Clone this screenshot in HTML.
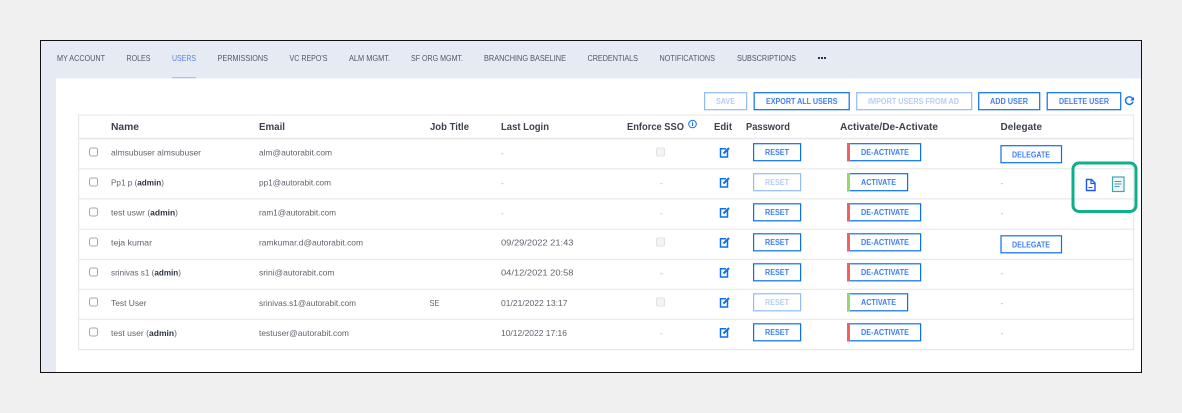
<!DOCTYPE html>
<html><head><meta charset="utf-8"><style>
html,body{margin:0;padding:0;background:#f0f0f0;width:1182px;height:413px;overflow:hidden}
svg{display:block;font-family:"Liberation Sans",sans-serif}
.tab{font-size:8px;fill:#4f5867}
.th{font-size:10px;font-weight:bold;fill:#3d4250}
.td{font-size:8.5px;fill:#5f646d}
.a{font-weight:bold;fill:#2c3342}
.btn{font-size:8px;font-weight:bold;fill:#3f7ff2}
.dis{font-size:8px;font-weight:bold;fill:#b6cdf7}
.bx{fill:#fff;stroke:#0b6ff2;stroke-width:1.2}
.bd{fill:#fff;stroke:#92bcf8;stroke-width:1.2}
.dash{font-size:8px;fill:#aaa}
.ln{stroke:#e8e8e8;stroke-width:1.2}
.cb{fill:#fff;stroke:#a8a8a8;stroke-width:1}
.cd{fill:#f4f4f4;stroke:#e2e2e2;stroke-width:1}
</style></head><body>
<svg width="1182" height="413" viewBox="0 0 1182 413" xmlns="http://www.w3.org/2000/svg">
<defs>
<g id="ed" fill="none" stroke="#0b6ff2"><path d="M727.500 150v7h-7v-8.300h5.500" stroke-width="1.500"/><path d="M723.500 153.500l5.500-5.500" stroke-width="2"/></g>
</defs>
<rect x="40.500" y="40.500" width="1101" height="332" fill="#fff" stroke="#111" stroke-width="1"/>
<rect x="41" y="41" width="1100" height="37.500" fill="#e6ebf3"/>
<rect x="41" y="78" width="15" height="294" fill="#e6ebf3"/>
<rect x="172" y="77" width="24" height="1.300" fill="#a9c6f3"/>

<text class="tab" x="57" y="61" textLength="48" lengthAdjust="spacingAndGlyphs">MY ACCOUNT</text>
<text class="tab" x="126.500" y="61" textLength="24" lengthAdjust="spacingAndGlyphs">ROLES</text>
<text class="tab" x="172" y="61" textLength="24" lengthAdjust="spacingAndGlyphs" style="fill:#5b7fe8">USERS</text>
<text class="tab" x="217.500" y="61" textLength="50.500" lengthAdjust="spacingAndGlyphs">PERMISSIONS</text>
<text class="tab" x="289.500" y="61" textLength="38" lengthAdjust="spacingAndGlyphs">VC REPO'S</text>
<text class="tab" x="349" y="61" textLength="41" lengthAdjust="spacingAndGlyphs">ALM MGMT.</text>
<text class="tab" x="411" y="61" textLength="52" lengthAdjust="spacingAndGlyphs">SF ORG MGMT.</text>
<text class="tab" x="484" y="61" textLength="82" lengthAdjust="spacingAndGlyphs">BRANCHING BASELINE</text>
<text class="tab" x="587.500" y="61" textLength="50.500" lengthAdjust="spacingAndGlyphs">CREDENTIALS</text>
<text class="tab" x="659.500" y="61" textLength="55.500" lengthAdjust="spacingAndGlyphs">NOTIFICATIONS</text>
<text class="tab" x="737" y="61" textLength="59" lengthAdjust="spacingAndGlyphs">SUBSCRIPTIONS</text>
<g fill="#2c3342"><rect x="818" y="57" width="2" height="2"/><rect x="821" y="57" width="2" height="2"/><rect x="824" y="57" width="2" height="2"/></g>

<!-- toolbar -->
<rect class="bd" x="704.600" y="92.700" width="42" height="17"/><text class="dis" x="716" y="104" textLength="19" lengthAdjust="spacingAndGlyphs">SAVE</text>
<rect class="bx" x="754.200" y="92.700" width="95" height="17"/><text class="btn" x="766" y="104" textLength="71.500" lengthAdjust="spacingAndGlyphs">EXPORT ALL USERS</text>
<rect class="bd" x="856.700" y="92.700" width="115" height="17"/><text class="dis" x="868" y="104" textLength="91" lengthAdjust="spacingAndGlyphs">IMPORT USERS FROM AD</text>
<rect class="bx" x="978.700" y="92.700" width="61" height="17"/><text class="btn" x="990" y="104" textLength="38" lengthAdjust="spacingAndGlyphs">ADD USER</text>
<rect class="bx" x="1047.200" y="92.700" width="73.500" height="17"/><text class="btn" x="1059" y="104" textLength="50" lengthAdjust="spacingAndGlyphs">DELETE USER</text>
<path d="M1132.500 98.500a3.800 3.800 0 1 0 .5 3" fill="none" stroke="#0b6ff2" stroke-width="1.400"/><path d="M1130 100.500h4v-3.500z" fill="#0b6ff2"/>

<!-- table -->
<rect x="78.600" y="115" width="1055" height="234.500" fill="#fff" stroke="#e8e8e8" stroke-width="1.200"/>
<line class="ln" x1="78" x2="1134" y1="138.600" y2="138.600" style="stroke-width:1.600"/>
<line class="ln" x1="78" x2="1134" y1="168.800" y2="168.800"/>
<line class="ln" x1="78" x2="1134" y1="198.900" y2="198.900"/>
<line class="ln" x1="78" x2="1134" y1="229.200" y2="229.200"/>
<line class="ln" x1="78" x2="1134" y1="259.300" y2="259.300"/>
<line class="ln" x1="78" x2="1134" y1="289.300" y2="289.300"/>
<line class="ln" x1="78" x2="1134" y1="319.300" y2="319.300"/>

<text class="th" x="111" y="130" textLength="28" lengthAdjust="spacingAndGlyphs">Name</text>
<text class="th" x="259" y="130" textLength="26" lengthAdjust="spacingAndGlyphs">Email</text>
<text class="th" x="430" y="130" textLength="39" lengthAdjust="spacingAndGlyphs">Job Title</text>
<text class="th" x="501" y="130" textLength="48" lengthAdjust="spacingAndGlyphs">Last Login</text>
<text class="th" x="627" y="130" textLength="57" lengthAdjust="spacingAndGlyphs">Enforce SSO</text>
<text class="th" x="714" y="130" textLength="18" lengthAdjust="spacingAndGlyphs">Edit</text>
<text class="th" x="746" y="130" textLength="44" lengthAdjust="spacingAndGlyphs">Password</text>
<text class="th" x="840" y="130" textLength="98" lengthAdjust="spacingAndGlyphs">Activate/De-Activate</text>
<text class="th" x="1000.500" y="130" textLength="41.500" lengthAdjust="spacingAndGlyphs">Delegate</text>
<circle cx="692.500" cy="124" r="3.800" fill="none" stroke="#0b6ff2" stroke-width="1"/><rect x="692" y="123" width="1.100" height="3" fill="#0b6ff2"/><rect x="692" y="121.500" width="1.100" height="1" fill="#0b6ff2"/>

<!-- checkboxes -->
<rect class="cb" x="89.500" y="148" width="8" height="8" rx="2"/>
<rect class="cb" x="89.500" y="178" width="8" height="8" rx="2"/>
<rect class="cb" x="89.500" y="208" width="8" height="8" rx="2"/>
<rect class="cb" x="89.500" y="238" width="8" height="8" rx="2"/>
<rect class="cb" x="89.500" y="268" width="8" height="8" rx="2"/>
<rect class="cb" x="89.500" y="298" width="8" height="8" rx="2"/>
<rect class="cb" x="89.500" y="328" width="8" height="8" rx="2"/>

<!-- names -->
<text class="td" x="111" y="155.300" textLength="90" lengthAdjust="spacingAndGlyphs">almsubuser almsubuser</text>
<text class="td" x="111" y="185.300" textLength="53" lengthAdjust="spacingAndGlyphs">Pp1 p (<tspan class="a">admin</tspan>)</text>
<text class="td" x="111" y="215.600" textLength="67" lengthAdjust="spacingAndGlyphs">test uswr (<tspan class="a">admin</tspan>)</text>
<text class="td" x="111" y="245.700" textLength="41" lengthAdjust="spacingAndGlyphs">teja kumar</text>
<text class="td" x="111" y="275.700" textLength="70" lengthAdjust="spacingAndGlyphs">srinivas s1 (<tspan class="a">admin</tspan>)</text>
<text class="td" x="111" y="305.800" textLength="35.500" lengthAdjust="spacingAndGlyphs">Test User</text>
<text class="td" x="111" y="335.800" textLength="66" lengthAdjust="spacingAndGlyphs">test user (<tspan class="a">admin</tspan>)</text>

<!-- emails -->
<text class="td" x="259" y="155.300" textLength="73" lengthAdjust="spacingAndGlyphs">alm@autorabit.com</text>
<text class="td" x="259" y="185.300" textLength="72" lengthAdjust="spacingAndGlyphs">pp1@autorabit.com</text>
<text class="td" x="259" y="215.600" textLength="77" lengthAdjust="spacingAndGlyphs">ram1@autorabit.com</text>
<text class="td" x="259" y="245.700" textLength="104" lengthAdjust="spacingAndGlyphs">ramkumar.d@autorabit.com</text>
<text class="td" x="259" y="275.700" textLength="75.500" lengthAdjust="spacingAndGlyphs">srini@autorabit.com</text>
<text class="td" x="259" y="305.800" textLength="97" lengthAdjust="spacingAndGlyphs">srinivas.s1@autorabit.com</text>
<text class="td" x="259" y="335.800" textLength="90" lengthAdjust="spacingAndGlyphs">testuser@autorabit.com</text>
<text class="td" x="429.500" y="305.800" textLength="10" lengthAdjust="spacingAndGlyphs">SE</text>

<!-- last login -->
<text class="dash" x="501" y="156">-</text>
<text class="dash" x="501" y="186">-</text>
<text class="dash" x="501" y="216">-</text>
<text class="td" x="501" y="245.700" textLength="72.500" lengthAdjust="spacingAndGlyphs">09/29/2022 21:43</text>
<text class="td" x="501" y="275.700" textLength="72.500" lengthAdjust="spacingAndGlyphs">04/12/2021 20:58</text>
<text class="td" x="501" y="305.800" textLength="66.500" lengthAdjust="spacingAndGlyphs">01/21/2022 13:17</text>
<text class="td" x="501" y="335.800" textLength="66" lengthAdjust="spacingAndGlyphs">10/12/2022 17:16</text>

<!-- SSO -->
<rect class="cd" x="656.500" y="148" width="8" height="8" rx="1.500"/>
<text class="dash" x="660" y="186">-</text>
<text class="dash" x="660" y="216">-</text>
<rect class="cd" x="656.500" y="238" width="8" height="8" rx="1.500"/>
<text class="dash" x="660" y="276">-</text>
<rect class="cd" x="656.500" y="298" width="8" height="8" rx="1.500"/>
<text class="dash" x="660" y="336">-</text>

<!-- edit icons -->
<use href="#ed"/>
<use href="#ed" y="30"/>
<use href="#ed" y="60"/>
<use href="#ed" y="90"/>
<use href="#ed" y="120"/>
<use href="#ed" y="150"/>
<use href="#ed" y="180"/>

<!-- reset -->
<rect class="bx" x="753.600" y="143.700" width="47" height="17"/><text class="btn" x="765" y="155" textLength="24" lengthAdjust="spacingAndGlyphs">RESET</text>
<rect class="bd" x="753.600" y="173.700" width="47" height="17"/><text class="dis" x="765" y="185" textLength="24" lengthAdjust="spacingAndGlyphs">RESET</text>
<rect class="bx" x="753.600" y="203.800" width="47" height="17"/><text class="btn" x="765" y="215" textLength="24" lengthAdjust="spacingAndGlyphs">RESET</text>
<rect class="bx" x="753.600" y="233.800" width="47" height="17"/><text class="btn" x="765" y="245" textLength="24" lengthAdjust="spacingAndGlyphs">RESET</text>
<rect class="bx" x="753.600" y="263.800" width="47" height="17"/><text class="btn" x="765" y="275" textLength="24" lengthAdjust="spacingAndGlyphs">RESET</text>
<rect class="bd" x="753.600" y="293.800" width="47" height="17"/><text class="dis" x="765" y="305" textLength="24" lengthAdjust="spacingAndGlyphs">RESET</text>
<rect class="bx" x="753.600" y="323.800" width="47" height="17"/><text class="btn" x="765" y="335" textLength="24" lengthAdjust="spacingAndGlyphs">RESET</text>

<!-- activate -->
<rect class="bx" x="847.600" y="143.700" width="73" height="17"/><rect x="847" y="143" width="3" height="18.300" fill="#f5605a"/><text class="btn" x="861" y="155" textLength="48" lengthAdjust="spacingAndGlyphs">DE-ACTIVATE</text>
<rect class="bx" x="847.600" y="173.700" width="60" height="17"/><rect x="847" y="173" width="3" height="18.300" fill="#95d86c"/><text class="btn" x="861" y="185" textLength="35" lengthAdjust="spacingAndGlyphs">ACTIVATE</text>
<rect class="bx" x="847.600" y="203.800" width="73" height="17"/><rect x="847" y="203" width="3" height="18.300" fill="#f5605a"/><text class="btn" x="861" y="215" textLength="48" lengthAdjust="spacingAndGlyphs">DE-ACTIVATE</text>
<rect class="bx" x="847.600" y="233.800" width="73" height="17"/><rect x="847" y="233" width="3" height="18.300" fill="#f5605a"/><text class="btn" x="861" y="245" textLength="48" lengthAdjust="spacingAndGlyphs">DE-ACTIVATE</text>
<rect class="bx" x="847.600" y="263.800" width="73" height="17"/><rect x="847" y="263" width="3" height="18.300" fill="#f5605a"/><text class="btn" x="861" y="275" textLength="48" lengthAdjust="spacingAndGlyphs">DE-ACTIVATE</text>
<rect class="bx" x="847.600" y="293.800" width="60" height="17"/><rect x="847" y="293" width="3" height="18.300" fill="#95d86c"/><text class="btn" x="861" y="305" textLength="35" lengthAdjust="spacingAndGlyphs">ACTIVATE</text>
<rect class="bx" x="847.600" y="323.800" width="73" height="17"/><rect x="847" y="323" width="3" height="18.300" fill="#f5605a"/><text class="btn" x="861" y="335" textLength="48" lengthAdjust="spacingAndGlyphs">DE-ACTIVATE</text>

<!-- delegate -->
<rect class="bx" x="1001" y="145.700" width="60.500" height="17"/><text class="btn" x="1012" y="157.500" textLength="38" lengthAdjust="spacingAndGlyphs">DELEGATE</text>
<rect class="bx" x="1001" y="235.800" width="60.500" height="17"/><text class="btn" x="1012" y="247.500" textLength="38" lengthAdjust="spacingAndGlyphs">DELEGATE</text>
<text class="dash" x="1000.500" y="186">-</text>
<text class="dash" x="1000.500" y="216">-</text>
<text class="dash" x="1000.500" y="276">-</text>
<text class="dash" x="1000.500" y="306">-</text>
<text class="dash" x="1000.500" y="336">-</text>

<!-- highlight -->
<rect x="1073" y="163" width="63" height="48.500" rx="6" fill="none" stroke="#0fae8c" stroke-width="3"/>
<path d="M1086.500 179.500h5l3.500 3.500v7.500h-8.500z" fill="#fff" stroke="#1a56f0" stroke-width="1.400"/>
<path d="M1091 179.500v4h4" fill="none" stroke="#1a56f0" stroke-width="1.200"/><rect x="1088.500" y="187" width="4" height="1" fill="#1a56f0"/>
<rect x="1112.500" y="177" width="11.500" height="14.500" fill="#eef6f8" stroke="#4aa3b3" stroke-width="1.200"/>
<g fill="#4aa3b3"><rect x="1114.500" y="181" width="7" height="1"/><rect x="1114.500" y="183.500" width="7" height="1"/><rect x="1114.500" y="186" width="5" height="1"/></g>
</svg>
</body></html>
